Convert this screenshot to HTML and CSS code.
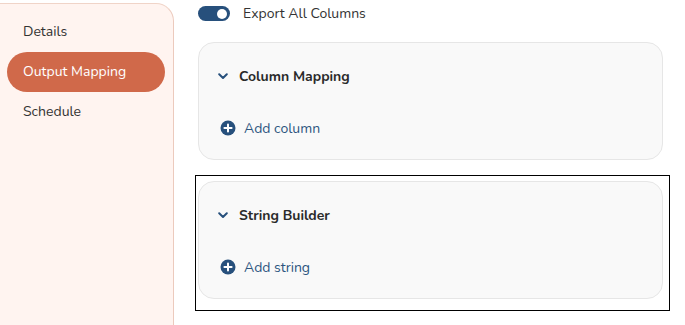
FILE: index.html
```html
<!DOCTYPE html>
<html lang="en">
<head>
    <meta charset="UTF-8">
    <meta name="viewport" content="width=device-width, initial-scale=1.0">
    <title>Output Mapping</title>
    <link rel="stylesheet" href="styles.css">
</head>
<body>
    <div class="page">
        <!-- Side navigation -->
        <nav class="sidebar">
            <a class="nav-item">Details</a>
            <a class="nav-item active">Output Mapping</a>
            <a class="nav-item">Schedule</a>
        </nav>

        <main class="content">
            <label class="toggle-row">
                <span class="toggle on"><span class="knob"></span></span>
                <span>Export All Columns</span>
            </label>

            <div class="card">
                <div class="card-header">
                    <svg class="chevron" width="10" height="7" viewBox="0 0 10 7"><path d="M1.2 1.3 L5 5 L8.8 1.3" fill="none" stroke="#27507c" stroke-width="2" stroke-linecap="round" stroke-linejoin="round"/></svg>
                    <span>Column Mapping</span>
                </div>
                <a class="add-link">
                    <svg width="16" height="16" viewBox="0 0 16 16"><circle cx="8" cy="8" r="7.5" fill="#27507c"/><path d="M8 4.4 V11.6 M4.4 8 H11.6" stroke="#fff" stroke-width="2" stroke-linecap="round"/></svg>
                    <span>Add column</span>
                </a>
            </div>

            <div class="selected">
                <div class="card">
                    <div class="card-header">
                        <svg class="chevron" width="10" height="7" viewBox="0 0 10 7"><path d="M1.2 1.3 L5 5 L8.8 1.3" fill="none" stroke="#27507c" stroke-width="2" stroke-linecap="round" stroke-linejoin="round"/></svg>
                        <span>String Builder</span>
                    </div>
                    <a class="add-link">
                        <svg width="16" height="16" viewBox="0 0 16 16"><circle cx="8" cy="8" r="7.5" fill="#27507c"/><path d="M8 4.4 V11.6 M4.4 8 H11.6" stroke="#fff" stroke-width="2" stroke-linecap="round"/></svg>
                        <span>Add string</span>
                    </a>
                </div>
            </div>
        </main>
    </div>
</body>
</html>
```

FILE: styles.css
```css
body {
    margin: 0;
    font-family: "Nunito", "Lato", "Open Sans", sans-serif;
    font-size: 14px;
    color: #333;
    background-color: #fff;
    overflow: hidden;
}

.page {
    display: flex;
    align-items: flex-start;
    height: 325px;
    overflow: hidden;
}

/* Side navigation */
.sidebar {
    width: 174px;
    height: 322px;
    margin-top: 3px;
    padding-top: 8px;
    box-sizing: border-box;
    background-color: #fff4f0;
    border-top: 1px solid #f0d4c8;
    border-right: 1px solid #eccabd;
    border-top-right-radius: 18px;
    display: flex;
    flex-direction: column;
}

.nav-item {
    height: 40px;
    line-height: 40px;
    margin-left: 7px;
    width: 158px;
    padding-left: 16px;
    box-sizing: border-box;
    border-radius: 20px;
    color: #333;
    cursor: pointer;
}

.nav-item.active {
    background-color: #d0694a;
    color: #fff;
}

/* Main content */
.content {
    padding-left: 24px;
    padding-top: 6px;
    display: flex;
    flex-direction: column;
}

.toggle-row {
    display: flex;
    align-items: center;
    gap: 13px;
    height: 15px;
}

.toggle {
    width: 32px;
    height: 15px;
    border-radius: 8px;
    background-color: #27507c;
    position: relative;
}

.toggle .knob {
    position: absolute;
    top: 2.5px;
    right: 3px;
    width: 10px;
    height: 10px;
    border-radius: 50%;
    background-color: #fff;
}

.card {
    width: 465px;
    height: 118px;
    box-sizing: border-box;
    background-color: #f9f9f9;
    border: 1px solid #e6e6e6;
    border-radius: 16px;
    padding: 0 19px;
    margin-top: 21px;
}

.card-header {
    display: flex;
    align-items: center;
    gap: 11px;
    height: 66px;
    font-weight: 700;
    color: #2a2a2a;
}

.add-link {
    display: flex;
    align-items: center;
    gap: 8px;
    height: 24px;
    margin-top: 7px;
    color: #2d5580;
    cursor: pointer;
}

.add-link svg {
    margin-left: 2px;
}

/* Highlighted block */
.selected {
    width: 475px;
    height: 136px;
    box-sizing: border-box;
    margin-top: 15px;
    margin-left: -3px;
    border: 1px solid #000;
    padding: 5px 0 0 2px;
}

.selected .card {
    margin-top: 0;
}
```
